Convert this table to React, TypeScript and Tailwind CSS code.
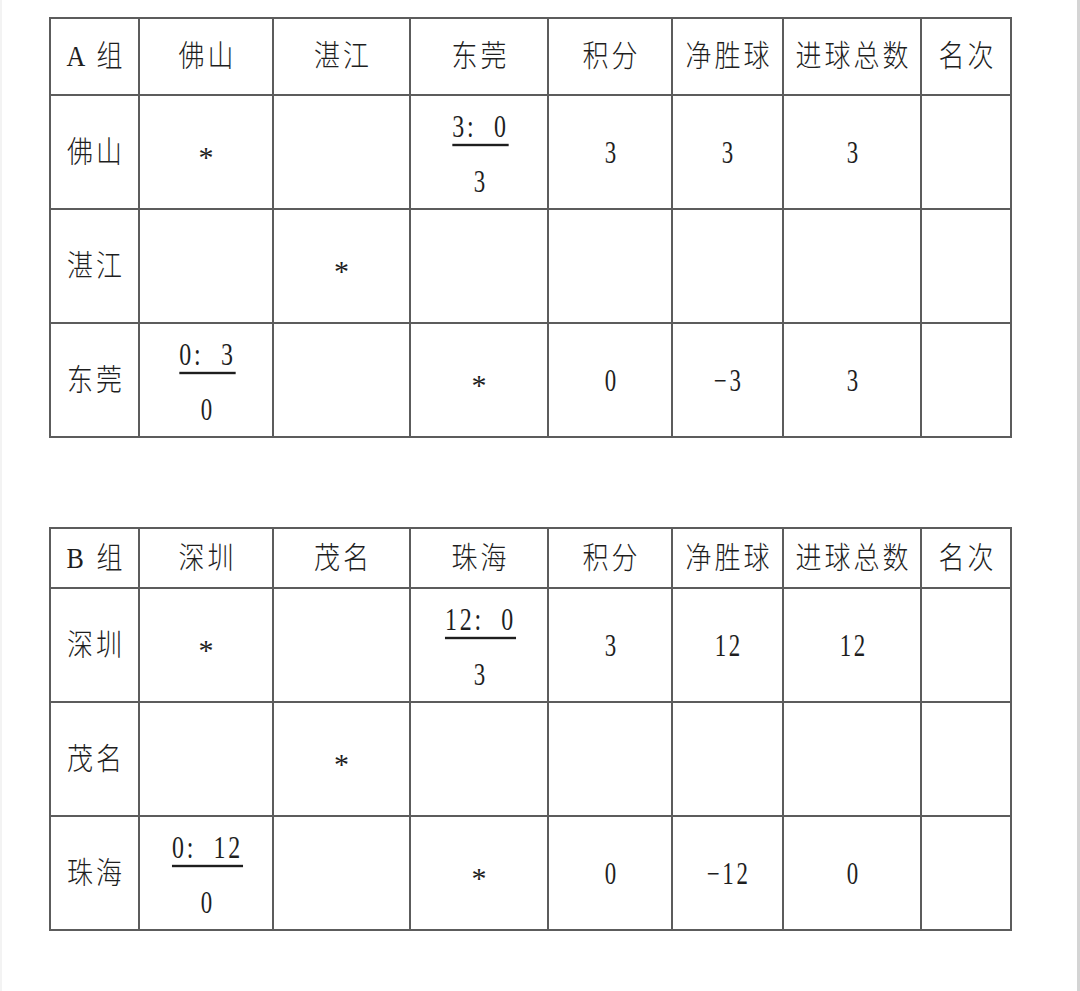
import React from "react";

const cols = [89, 134, 137, 138, 124, 111, 138, 90];

type Cell = string | { score: string; pts: string } | null;

const isNum = (s: string) => /^[−0-9: ]+$/.test(s);

function Txt({ children }: { children: string }) {
  if (isNum(children)) {
    return (
      <span className="inline-block scale-y-[1.2] scale-x-[0.88] tracking-[3px] pl-[3px] whitespace-pre">
        {children}
      </span>
    );
  }
  return (
    <span className="inline-block scale-y-[1.15] tracking-[3px] pl-[3px] whitespace-pre">
      {children}
    </span>
  );
}

function Star() {
  return <span className="inline-block translate-y-[4px] text-[30px]">*</span>;
}

function Score({ score, pts }: { score: string; pts: string }) {
  return (
    <div className="flex flex-col items-center gap-[27px] pt-[4px]">
      <span className="inline-block scale-y-[1.2] scale-x-[0.92] tracking-[3px] pl-[3px] whitespace-pre underline decoration-[1.5px] underline-offset-[6px] leading-[28px]">
        {score}
      </span>
      <span className="inline-block scale-y-[1.2] scale-x-[0.88] leading-[28px]">{pts}</span>
    </div>
  );
}

function Table({
  header,
  rows,
  headerH,
}: {
  header: string[];
  rows: Cell[][];
  headerH: string;
}) {
  return (
    <table className="table-fixed border-collapse w-[961px] ml-[49px] text-[26px] text-[#1e1e1e]">
      <colgroup>
        {cols.map((w, i) => (
          <col key={i} style={{ width: w }} />
        ))}
      </colgroup>
      <tbody>
        <tr className={headerH}>
          {header.map((h, i) => (
            <td key={i} className="border-2 border-[#5c5c5c] text-center align-middle p-0">
              <Txt>{h}</Txt>
            </td>
          ))}
        </tr>
        {rows.map((r, ri) => (
          <tr key={ri} className="h-[114px]">
            {r.map((c, ci) => (
              <td key={ci} className="border-2 border-[#5c5c5c] text-center align-middle p-0">
                {c === null ? null : typeof c === "string" ? (
                  c === "*" ? (
                    <Star />
                  ) : (
                    <Txt>{c}</Txt>
                  )
                ) : (
                  <Score score={c.score} pts={c.pts} />
                )}
              </td>
            ))}
          </tr>
        ))}
      </tbody>
    </table>
  );
}

export default function App() {
  const font = { fontFamily: "'Liberation Serif', 'Noto Sans CJK SC', serif" };
  return (
    <div className="flex w-[1080px] h-[991px] bg-white overflow-hidden" style={font}>
      <div className="w-[2px] bg-[#f3f3f3]" />
      <div className="flex-1 flex flex-col pt-[17px] font-light">
        <div className="-ml-[2px]">
          <Table
            headerH="h-[77px]"
            header={["A 组", "佛山", "湛江", "东莞", "积分", "净胜球", "进球总数", "名次"]}
            rows={[
              ["佛山", "*", null, { score: "3:  0", pts: "3" }, "3", "3", "3", null],
              ["湛江", null, "*", null, null, null, null, null],
              ["东莞", { score: "0:  3", pts: "0" }, null, "*", "0", "−3", "3", null],
            ]}
          />
        </div>
        <div className="-ml-[2px] mt-[89px]">
          <Table
            headerH="h-[60px]"
            header={["B 组", "深圳", "茂名", "珠海", "积分", "净胜球", "进球总数", "名次"]}
            rows={[
              ["深圳", "*", null, { score: "12:  0", pts: "3" }, "3", "12", "12", null],
              ["茂名", null, "*", null, null, null, null, null],
              ["珠海", { score: "0:  12", pts: "0" }, null, "*", "0", "−12", "0", null],
            ]}
          />
        </div>
      </div>
      <div className="w-[3px] bg-[#d4d4d4]" />
    </div>
  );
}
